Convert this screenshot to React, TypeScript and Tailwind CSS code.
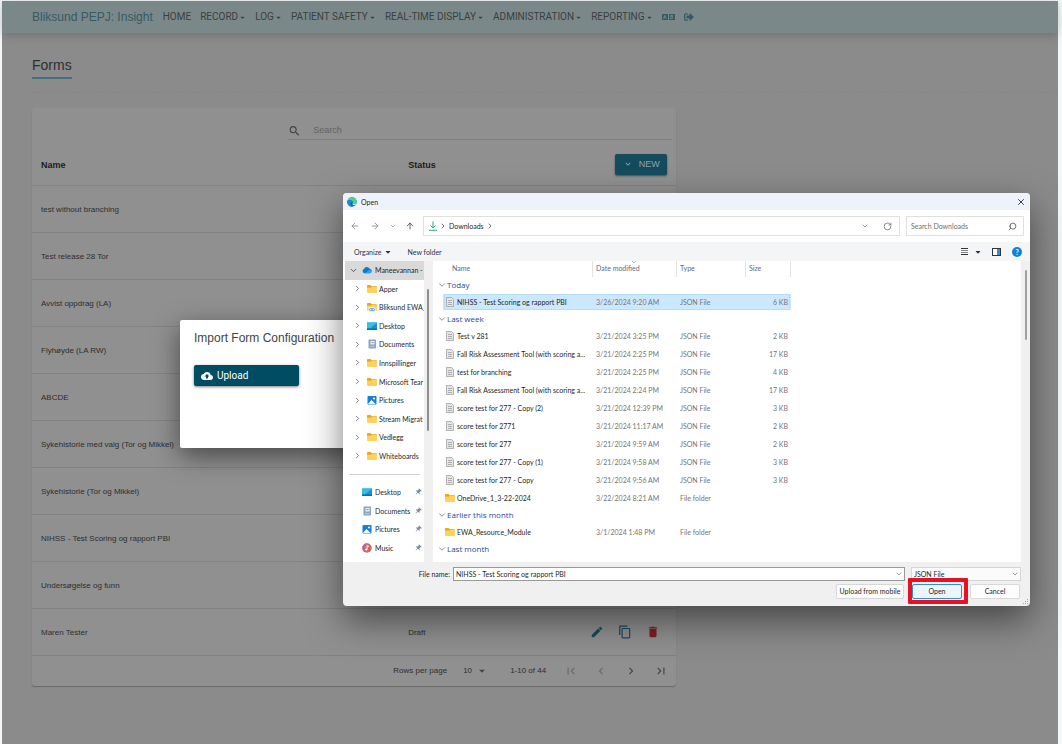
import React, { useState } from 'react';
import { FaSignOutAlt, FaCaretDown } from 'react-icons/fa';
import {
  MdSearch, MdEdit, MdContentCopy, MdDelete, MdCloudUpload, MdFirstPage, MdLastPage,
  MdChevronLeft, MdChevronRight, MdKeyboardArrowDown, MdArrowDropDown, MdPushPin
} from 'react-icons/md';
import { ArrowLeft, ArrowRight, ArrowUp, ChevronDown, ChevronRight, RotateCw, Search, X } from 'lucide-react';

const NAV = [
  { label: 'HOME', menu: false },
  { label: 'RECORD', menu: true },
  { label: 'LOG', menu: true },
  { label: 'PATIENT SAFETY', menu: true },
  { label: 'REAL-TIME DISPLAY', menu: true },
  { label: 'ADMINISTRATION', menu: true },
  { label: 'REPORTING', menu: true }
];

interface FormRow {
  name: string;
  status?: string;
}

const FORMS: FormRow[] = [
  { name: 'test without branching' },
  { name: 'Test release 28 Tor' },
  { name: 'Avvist oppdrag (LA)' },
  { name: 'Flyhøyde (LA RW)' },
  { name: 'ABCDE' },
  { name: 'Sykehistorie med valg (Tor og Mikkel)' },
  { name: 'Sykehistorie (Tor og Mikkel)' },
  { name: 'NIHSS - Test Scoring og rapport PBI' },
  { name: 'Undersøgelse og funn' },
  { name: 'Maren Tester', status: 'Draft' }
];

type IconKind = 'folder' | 'shared' | 'desktop' | 'documents' | 'pictures' | 'music' | 'file' | 'cloud';

const TREE: { label: string; icon: IconKind }[] = [
  { label: 'Apper', icon: 'folder' },
  { label: 'Bliksund EWA_', icon: 'shared' },
  { label: 'Desktop', icon: 'desktop' },
  { label: 'Documents', icon: 'documents' },
  { label: 'Innspillinger', icon: 'folder' },
  { label: 'Microsoft Tear', icon: 'folder' },
  { label: 'Pictures', icon: 'pictures' },
  { label: 'Stream Migrat', icon: 'folder' },
  { label: 'Vedlegg', icon: 'folder' },
  { label: 'Whiteboards', icon: 'folder' }
];

const PINNED: { label: string; icon: IconKind }[] = [
  { label: 'Desktop', icon: 'desktop' },
  { label: 'Documents', icon: 'documents' },
  { label: 'Pictures', icon: 'pictures' },
  { label: 'Music', icon: 'music' }
];

interface FileEntry {
  name: string;
  date: string;
  type: string;
  size?: string;
}

const GROUPS: { title: string; files: FileEntry[] }[] = [
  {
    title: 'Today',
    files: [{ name: 'NIHSS - Test Scoring og rapport PBI', date: '3/26/2024 9:20 AM', type: 'JSON File', size: '6 KB' }]
  },
  {
    title: 'Last week',
    files: [
      { name: 'Test v 281', date: '3/21/2024 3:25 PM', type: 'JSON File', size: '2 KB' },
      { name: 'Fall Risk Assessment Tool (with scoring a...', date: '3/21/2024 2:25 PM', type: 'JSON File', size: '17 KB' },
      { name: 'test for branching', date: '3/21/2024 2:25 PM', type: 'JSON File', size: '4 KB' },
      { name: 'Fall Risk Assessment Tool (with scoring a...', date: '3/21/2024 2:24 PM', type: 'JSON File', size: '17 KB' },
      { name: 'score test for 277 - Copy (2)', date: '3/21/2024 12:39 PM', type: 'JSON File', size: '3 KB' },
      { name: 'score test for 2771', date: '3/21/2024 11:17 AM', type: 'JSON File', size: '2 KB' },
      { name: 'score test for 277', date: '3/21/2024 9:59 AM', type: 'JSON File', size: '2 KB' },
      { name: 'score test for 277 - Copy (1)', date: '3/21/2024 9:58 AM', type: 'JSON File', size: '3 KB' },
      { name: 'score test for 277 - Copy', date: '3/21/2024 9:56 AM', type: 'JSON File', size: '3 KB' },
      { name: 'OneDrive_1_3-22-2024', date: '3/22/2024 8:21 AM', type: 'File folder' }
    ]
  },
  {
    title: 'Earlier this month',
    files: [{ name: 'EWA_Resource_Module', date: '3/1/2024 1:48 PM', type: 'File folder' }]
  },
  { title: 'Last month', files: [] }
];

function Glyph({ kind }: { kind: IconKind }) {
  if (kind === 'folder' || kind === 'shared') {
    return (
      <svg viewBox="0 0 20 20" className="size-[10px] shrink-0">
        <path d="M0 3.500Q0 2 1.500 2H7l2.500 2.500H18.500Q20 4.500 20 6v3H0z" fill="#eaa71a" />
        <path d="M0 7.500h7.500L9.500 6H18.500Q20 6 20 7.500v9Q20 18 18.500 18H1.500Q0 18 0 16.500z" fill="#ffd25e" />
        {kind === 'shared' && (
          <g>
            <rect x="3" y="10" width="14" height="10" rx="3" fill="#eef6fd" />
            <circle cx="7.500" cy="15" r="2.500" fill="none" stroke="#3d8fce" strokeWidth="1.600" />
            <circle cx="12.500" cy="15" r="2.500" fill="none" stroke="#3d8fce" strokeWidth="1.600" />
          </g>
        )}
      </svg>
    );
  }
  if (kind === 'desktop') {
    return (
      <svg viewBox="0 0 20 20" className="size-[10px] shrink-0">
        <path d="M0 3h20v15H0z" fill="#1493cf" />
        <path d="M0 3h20L6 15H0z" fill="#32c1e2" />
        <path d="M0 15h20v3H0z" fill="#0f6fa8" />
      </svg>
    );
  }
  if (kind === 'documents') {
    return (
      <svg viewBox="0 0 20 20" className="size-[10px] shrink-0">
        <rect x="3" y="1" width="15" height="18" rx="1.500" fill="#8ba5c2" />
        <path d="M7 4h8v7H7z" fill="#e8f0f8" />
        <path d="M9 7h4" stroke="#53779f" strokeWidth="1.500" />
        <path d="M6 15h9" stroke="#b9cbdd" strokeWidth="2" />
      </svg>
    );
  }
  if (kind === 'pictures') {
    return (
      <svg viewBox="0 0 20 20" className="size-[10px] shrink-0">
        <rect x="1" y="2" width="18" height="17" rx="1.500" fill="#1580d4" />
        <path d="M2 18l7-8 8 8z" fill="#fff" />
        <circle cx="14" cy="7" r="2" fill="#fff" />
      </svg>
    );
  }
  if (kind === 'music') {
    return (
      <svg viewBox="0 0 20 20" className="size-[10px] shrink-0">
        <circle cx="10" cy="10" r="9.500" fill="#d2675b" />
        <path d="M10 .5a9.500 9.500 0 0 0-9.500 9.500q0 4 3 7z" fill="#b565a0" />
        <path d="M10 5v8M10 5l4 2" stroke="#fff" strokeWidth="1.800" fill="none" />
        <circle cx="8.500" cy="13" r="2.200" fill="#fff" />
      </svg>
    );
  }
  if (kind === 'cloud') {
    return (
      <svg viewBox="0 0 20 20" className="size-[10px] shrink-0">
        <path d="M4.500 16.500A4.500 4.500 0 0 1 4 8a6 6 0 0 1 11-1 4.800 4.800 0 0 1 .5 9.500z" fill="#1078d0" />
        <path d="M6 16.500l10-8a4.300 4.300 0 0 1 0 8z" fill="#2aa3ec" />
      </svg>
    );
  }
  return (
    <svg viewBox="0 0 20 20" className="size-[10px] shrink-0">
      <path d="M3 1h10l4 4v14H3z" fill="#e6e6e6" stroke="#969696" strokeWidth="1.400" />
      <path d="M6 7h8M6 11h8M6 15h8" stroke="#9e9e9e" strokeWidth="1.600" />
    </svg>
  );
}

function EdgeLogo() {
  return (
    <svg viewBox="0 0 20 20" className="size-[10px]">
      <circle cx="10" cy="10" r="9.500" fill="#1467b3" />
      <path d="M1 7A9.500 9.500 0 0 1 19.500 10c0 3-2.500 4.500-5 4.500-2 0-3-1-2.500-2.500C12.500 8 6 4 1 7z" fill="#4fcf8a" />
      <path d="M1 7c5-3 11 .5 11 4-3-2-6 0-5 4 .6 2.500 2.500 4 5 4.300A9.500 9.500 0 0 1 1 7z" fill="#1b8bd8" />
      <path d="M12 11.500c0 2 1 3 3 3 1.500 0 3-.6 4-2-.8 2-2 3.500-4 4-3 .5-5-2-3-5z" fill="#fff" />
    </svg>
  );
}

function NavBar() {
  return (
    <header className="relative flex h-8 items-center bg-[#7a8889] pl-[30px] shadow-[0_2px_10px_rgba(0,0,0,0.2)]">
      <a href="#" className="text-[12px] leading-4 text-[#365a66]">Bliksund PEPJ: Insight</a>
      <nav className="ml-[10px] flex items-center gap-[9px] font-[Roboto,sans-serif] text-[10px] leading-4 text-[#3a4041]">
        {NAV.map(item => (
          <a key={item.label} href="#" className="flex items-center gap-px">
            {item.label}
            {item.menu && <FaCaretDown className="size-[7px]" />}
          </a>
        ))}
        <a href="#" aria-label="Language" className="flex gap-px text-[5px] leading-[6px] font-bold text-[#7a8889]">
          <span className="w-[6px] bg-[#365a66] text-center">A</span>
          <span className="w-[6px] bg-[#365a66] text-center">B</span>
        </a>
        <a href="#" aria-label="Log out" className="text-[#365a66]">
          <FaSignOutAlt className="size-[10px]" />
        </a>
      </nav>
    </header>
  );
}

function FormsTable() {
  const [query, setQuery] = useState('');

  return (
    <section className="mt-[15px] ml-[30px] w-[61%] rounded-[3px] bg-[#909090] text-[8px] text-[#2e2e2e] shadow-[0_1px_1px_rgba(0,0,0,0.25)]">
      <div className="flex h-9 justify-end pr-1">
        <label className="mt-3 flex h-5 w-[60%] items-center gap-3 border-b border-[#7f7f7f] pt-[2px]">
          <MdSearch className="size-[14px] text-[#444]" />
          <input
            aria-label="Search"
            placeholder="Search"
            value={query}
            onChange={e => setQuery(e.target.value)}
            className="w-full bg-transparent text-[9px] outline-none placeholder:text-[#636363]"
          />
        </label>
      </div>
      <table className="w-full table-fixed border-collapse">
        <thead>
          <tr className="h-[41px] border-b border-[#828282] text-left text-[9px] text-[#1c1c1c]">
            <th className="w-[57%] pt-[2px] pl-[9px] font-bold">Name</th>
            <th className="pt-[2px] pl-[9px] font-bold">Status</th>
            <th className="pr-[9px] text-right">
              <button className="inline-flex h-[21px] w-[52px] items-center justify-center gap-[6px] rounded-[2px] bg-[#144c5e] font-normal text-[#8fa3aa] shadow-[0_1px_2px_rgba(0,0,0,0.5)]">
                <MdKeyboardArrowDown className="size-[10px]" />
                NEW
              </button>
            </th>
          </tr>
        </thead>
        <tbody>
          {FORMS.map(form => (
            <tr key={form.name} className="h-[47px] border-b border-[#828282]">
              <td className="pt-[2px] pl-[9px]">{form.name}</td>
              <td className="pt-[2px] pl-[9px]">{form.status}</td>
              <td className="pr-4">
                {form.status && (
                  <div className="flex justify-end gap-[14px]">
                    <button aria-label="Edit" className="text-[#144c5e]"><MdEdit className="size-[14px]" /></button>
                    <button aria-label="Copy" className="text-[#144c5e]"><MdContentCopy className="size-[14px]" /></button>
                    <button aria-label="Delete" className="text-[#7d1f22]"><MdDelete className="size-[14px]" /></button>
                  </div>
                )}
              </td>
            </tr>
          ))}
        </tbody>
      </table>
      <div className="flex h-[30px] items-center justify-end">
        <label htmlFor="rows">Rows per page</label>
        <span className="relative ml-4 flex items-center">
          <select id="rows" className="w-[25px] appearance-none bg-transparent outline-none">
            <option>10</option>
          </select>
          <MdArrowDropDown className="pointer-events-none absolute -right-px size-[14px] text-[#444]" />
        </span>
        <span className="mr-[10px] ml-[22px]">1-10 of 44</span>
        <button aria-label="First page" className="flex w-[30px] justify-center text-[#6a6a6a]"><MdFirstPage className="size-[14px]" /></button>
        <button aria-label="Previous page" className="flex w-[30px] justify-center text-[#6a6a6a]"><MdChevronLeft className="size-[14px]" /></button>
        <button aria-label="Next page" className="flex w-[30px] justify-center text-[#444]"><MdChevronRight className="size-[14px]" /></button>
        <button aria-label="Last page" className="flex w-[30px] justify-center text-[#444]"><MdLastPage className="size-[14px]" /></button>
      </div>
    </section>
  );
}

function ImportDialog() {
  return (
    <div role="dialog" aria-label="Import Form Configuration" className="absolute top-[320px] left-[180px] h-32 w-[700px] rounded-[2px] bg-white px-[14px] pt-[10px] shadow-[0_8px_26px_rgba(0,0,0,0.5)]">
      <h2 className="text-[12px] leading-4 text-[#444]">Import Form Configuration</h2>
      <button className="mt-[19px] flex h-[21px] w-[105px] items-center gap-1 rounded-[2px] bg-[#004d63] pl-[7px] font-[Roboto,sans-serif] text-[10px] text-white shadow-[0_1px_3px_rgba(0,0,0,0.5)]">
        <MdCloudUpload className="size-3" />
        Upload
      </button>
    </div>
  );
}

function Sidebar() {
  return (
    <aside className="flex w-[90px] shrink-0 overflow-hidden bg-[#f0f0f0]">
      <div className="w-[81px] overflow-hidden bg-white pl-[2px] whitespace-nowrap">
        <ul className="grid h-[204px] auto-rows-fr">
          <li className="flex items-center bg-[#d9d9d9] pl-1">
            <ChevronDown className="size-[9px] text-[#333]" />
            <span className="ml-1 flex items-center gap-[3px]">
              <Glyph kind="cloud" />
              Maneevannan -
            </span>
          </li>
          {TREE.map(node => (
            <li key={node.label} className="flex items-center gap-[5px] pl-2">
              <ChevronRight className="size-[9px] shrink-0 text-[#555]" />
              <span className="flex items-center gap-[2px]">
                <Glyph kind={node.icon} />
                {node.label}
              </span>
            </li>
          ))}
        </ul>
        <hr className="mx-1 mt-[9px] mb-2 border-[#d0d0d0]" />
        <ul className="grid h-[74px] auto-rows-fr">
          {PINNED.map(node => (
            <li key={node.label} className="flex items-center gap-[3px] pr-[2px] pl-[17px]">
              <Glyph kind={node.icon} />
              {node.label}
              <MdPushPin className="ml-auto size-2 rotate-45 text-[#7f8c99]" />
            </li>
          ))}
        </ul>
      </div>
      <div className="mt-7 ml-[3px] h-[142px] w-[2px] rounded bg-[#8f8f8f]"></div>
    </aside>
  );
}

function FileList() {
  const [selected, setSelected] = useState('NIHSS - Test Scoring og rapport PBI');

  return (
    <div className="min-w-0 flex-1 overflow-hidden bg-white pl-[10px]">
      <table className="w-[348px] table-fixed border-separate border-spacing-0 whitespace-nowrap">
        <thead>
          <tr className="h-4 text-left align-top text-[#5a6b85]">
            <th className="w-[150px] border-r border-[#e3e3e3] pl-[9px] font-normal">Name</th>
            <th className="relative w-[84px] border-r border-[#e3e3e3] pl-[3px] font-normal">
              Date modified
              <ChevronDown className="absolute -top-[3px] left-[37px] size-2 text-[#999]" />
            </th>
            <th className="w-[69px] border-r border-[#e3e3e3] pl-[3px] font-normal">Type</th>
            <th className="border-r border-[#e3e3e3] pl-[3px] font-normal">Size</th>
          </tr>
        </thead>
        {GROUPS.map(group => (
          <tbody key={group.title}>
            <tr className="h-4">
              <th colSpan={4} className="text-left font-['Open_Sans',sans-serif] text-[8px] leading-4 font-normal text-[#2e4799]">
                <span className="-ml-[6px] flex items-center">
                  <ChevronDown className="size-[10px] text-[#777]" />
                  {group.title}
                </span>
              </th>
            </tr>
            {group.files.map((file, idx) => {
              const active = file.name === selected;
              const cell = active ? 'border-y border-transparent bg-[#cce8ff] bg-clip-padding' : 'border-y border-transparent';
              return (
                <tr
                  key={idx}
                  onClick={() => setSelected(file.name)}
                  className={active ? 'h-[18px] outline -outline-offset-2 outline-[#b4dcfb]' : 'h-[18px]'}
                >
                  <td className={cell}>
                    <span className="flex items-center gap-[2px] pl-[2px] text-[#1f1f1f]">
                      <Glyph kind={file.size ? 'file' : 'folder'} />
                      {file.name}
                    </span>
                  </td>
                  <td className={`${cell} pl-[3px] text-[#757575]`}>{file.date}</td>
                  <td className={`${cell} pl-[3px] text-[#757575]`}>{file.type}</td>
                  <td className={`${cell} pr-[3px] text-right text-[#757575]`}>{file.size}</td>
                </tr>
              );
            })}
          </tbody>
        ))}
      </table>
    </div>
  );
}

function OpenDialog() {
  const [fileName, setFileName] = useState('NIHSS - Test Scoring og rapport PBI');

  return (
    <div role="dialog" aria-label="Open" className="absolute top-[193px] left-[343px] flex h-[413px] w-[687px] flex-col rounded-[4px] bg-[#f0f0f0] font-[Lato,'Open_Sans',sans-serif] text-[7px] leading-[14px] text-[#1f1f1f] shadow-[0_14px_36px_rgba(0,0,0,0.5)]">
      <div className="flex h-[17px] shrink-0 items-center gap-1 rounded-t-[4px] bg-[#eef2fa] pr-1 pl-1">
        <EdgeLogo />
        <span>Open</span>
        <button aria-label="Close" className="ml-auto"><X className="size-[10px]" /></button>
      </div>
      <div className="flex h-8 shrink-0 items-center bg-white pr-[6px] pl-[2px] text-[#444]">
        <button aria-label="Back" className="flex w-5 justify-center text-[#888]"><ArrowLeft className="size-[10px]" /></button>
        <button aria-label="Forward" className="flex w-5 justify-center text-[#888]"><ArrowRight className="size-[10px]" /></button>
        <button aria-label="Recent" className="flex w-4 justify-center text-[#888]"><ChevronDown className="size-2" /></button>
        <button aria-label="Up" className="flex w-[18px] justify-center"><ArrowUp className="size-[10px]" /></button>
        <div className="ml-1 flex h-5 flex-1 items-center border border-[#e0e0e0] px-1 text-[#1f1f1f]">
          <svg viewBox="0 0 20 20" className="size-[10px]">
            <path d="M10 1v13M5 9l5 5 5-5M2 18.500h16" fill="none" stroke="#26a884" strokeWidth="2" />
          </svg>
          <ChevronRight className="mr-[2px] ml-px size-2" />
          Downloads
          <ChevronRight className="ml-[2px] size-2" />
          <ChevronDown className="mr-[14px] ml-auto size-2 text-[#666]" />
          <RotateCw className="mr-[3px] size-[9px] text-[#666]" />
        </div>
        <div className="ml-[6px] flex h-5 w-[118px] items-center border border-[#e0e0e0] pr-[6px] pl-1">
          <input aria-label="Search Downloads" placeholder="Search Downloads" className="w-full min-w-0 bg-transparent outline-none placeholder:text-[#6e6e6e]" />
          <Search className="size-[9px] shrink-0 -scale-x-100" />
        </div>
      </div>
      <div className="flex h-[19px] shrink-0 items-center bg-[#f4f5f7] pr-2 pl-[11px] text-[#27344f]">
        <button className="flex items-center gap-[2px]">
          Organize
          <FaCaretDown className="size-2" />
        </button>
        <button className="ml-4">New folder</button>
        <button aria-label="Change view" className="ml-auto flex items-center gap-[6px]">
          <svg viewBox="0 0 7 7" className="size-[7px]">
            <path d="M0 0h7v1H0zM0 6h7v1H0z" fill="#333" />
            <path d="M0 2h7v1H0zM0 4h7v1H0z" fill="#888" />
          </svg>
          <FaCaretDown className="size-2" />
        </button>
        <button aria-label="Preview pane" className="ml-[10px]">
          <svg viewBox="0 0 9 8" className="h-2 w-[9px]">
            <path d="M0 0h9v8H0z" fill="#333" />
            <path d="M1 1h4v6H1z" fill="#fff" />
            <path d="M5 1h3v6H5z" fill="#2196e8" />
          </svg>
        </button>
        <button aria-label="Help" className="ml-[11px] flex size-[10px] items-center justify-center rounded-full bg-[#0f83d8] text-[7px] font-bold text-white">?</button>
      </div>
      <div className="flex min-h-0 flex-1">
        <Sidebar />
        <FileList />
        <div className="w-[9px] shrink-0">
          <div className="mt-[9px] ml-1 h-[70px] w-[2px] rounded bg-[#a0a0a0]"></div>
        </div>
      </div>
      <form className="h-[44px] shrink-0 pt-[5px] pr-[9px]" onSubmit={e => e.preventDefault()}>
        <div className="flex h-[14px]">
          <label htmlFor="file-name" className="w-[108px] pr-[1px] text-right">File name:</label>
          <div className="relative ml-[2px] flex-1">
            <input
              id="file-name"
              value={fileName}
              onChange={e => setFileName(e.target.value)}
              className="h-full w-full border border-[#999] bg-white px-[2px] outline-none"
            />
            <ChevronDown className="absolute top-[3px] right-[2px] size-2 text-[#666]" />
          </div>
          <div className="relative ml-[6px] w-[110px]">
            <select aria-label="File type" className="h-full w-full appearance-none border border-[#d5d5d5] bg-[#fbfbfb] px-[2px] leading-3 outline-none">
              <option>JSON File</option>
            </select>
            <ChevronDown className="pointer-events-none absolute top-[3px] right-[2px] size-2 text-[#666]" />
          </div>
        </div>
        <div className="mt-[3px] flex h-[15px] justify-end gap-2 pr-[1px]">
          <button type="button" className="w-[68px] rounded-[2px] border border-[#d8d8d8] bg-[#fdfdfd] leading-[13px] whitespace-nowrap">Upload from mobile</button>
          <div className="relative flex">
            <button type="submit" className="w-[50px] rounded-[2px] border border-[#2f8fd8] bg-[#eef4fc] leading-[13px]">Open</button>
            <span className="pointer-events-none absolute -top-[6px] -right-[6px] -bottom-[5px] -left-1 rounded-[1px] border-4 border-[#e81123]"></span>
          </div>
          <button type="button" className="w-[50px] rounded-[2px] border border-[#d8d8d8] bg-[#fdfdfd] leading-[13px]">Cancel</button>
        </div>
      </form>
      <svg viewBox="0 0 6 6" className="absolute right-[1px] bottom-[1px] size-[6px]" fill="#aaa">
        <path d="M4 0h1v1H4zM2 2h1v1H2zM4 2h1v1H4zM0 4h1v1H0zM2 4h1v1H2zM4 4h1v1H4z" />
      </svg>
    </div>
  );
}

export default function App() {
  return (
    <div className="relative min-h-screen overflow-hidden bg-[#f4f7f7] pt-px pr-1 pl-[2px] font-['Liberation_Sans',Arial,sans-serif]">
      <div className="min-h-screen bg-[#8b8b8b]">
        <NavBar />
        <main>
          <div className="ml-[30px] flex h-[60px] border-b border-dashed border-[#868686] pt-[22px]">
            <h1 className="h-6 border-b-2 border-[#45707f] text-[14px] leading-5 text-[#2e2e2e]">Forms</h1>
          </div>
          <FormsTable />
        </main>
      </div>
      <ImportDialog />
      <OpenDialog />
    </div>
  );
}
